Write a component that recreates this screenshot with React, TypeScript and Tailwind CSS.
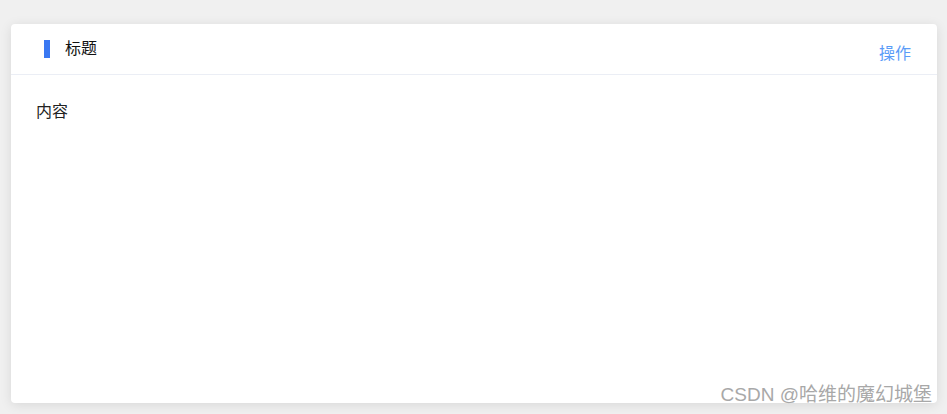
export default function App() {
  return (
    <div className="relative h-[414px] w-[947px] overflow-hidden bg-[#f0f0f0] pl-[11px] pr-[10px] pt-[24px] pb-[11px] font-['Liberation_Sans','Noto_Sans_CJK_SC',sans-serif]">
      <div className="flex h-full flex-col rounded-[4px] bg-white shadow-[0_2px_12px_rgba(0,0,0,0.1)]">
        {/* header */}
        <div className="flex h-[51px] items-start justify-between border-b border-[#ebeef5] pl-[33px] pr-[26px]">
          <div className="flex items-center pt-[16px]">
            <span className="h-[18px] w-[6px] bg-[#3a78f2]" />
            <span className="ml-[15px] text-[16px] leading-[18px] text-[#111]">标题</span>
          </div>
          <button className="mt-[21px] text-[16px] leading-[18px] text-[#5a9cf8]">操作</button>
        </div>
        {/* body */}
        <div className="px-[25px] pt-[27px] text-[16px] leading-[20px] text-[#222]">内容</div>
      </div>
      <div className="absolute bottom-[8px] right-[15px] text-[19px] leading-[22px] text-[#a8a8a8] [text-shadow:0_0_1px_rgba(255,255,255,0.8)]">
        CSDN @哈维的魔幻城堡
      </div>
    </div>
  )
}
